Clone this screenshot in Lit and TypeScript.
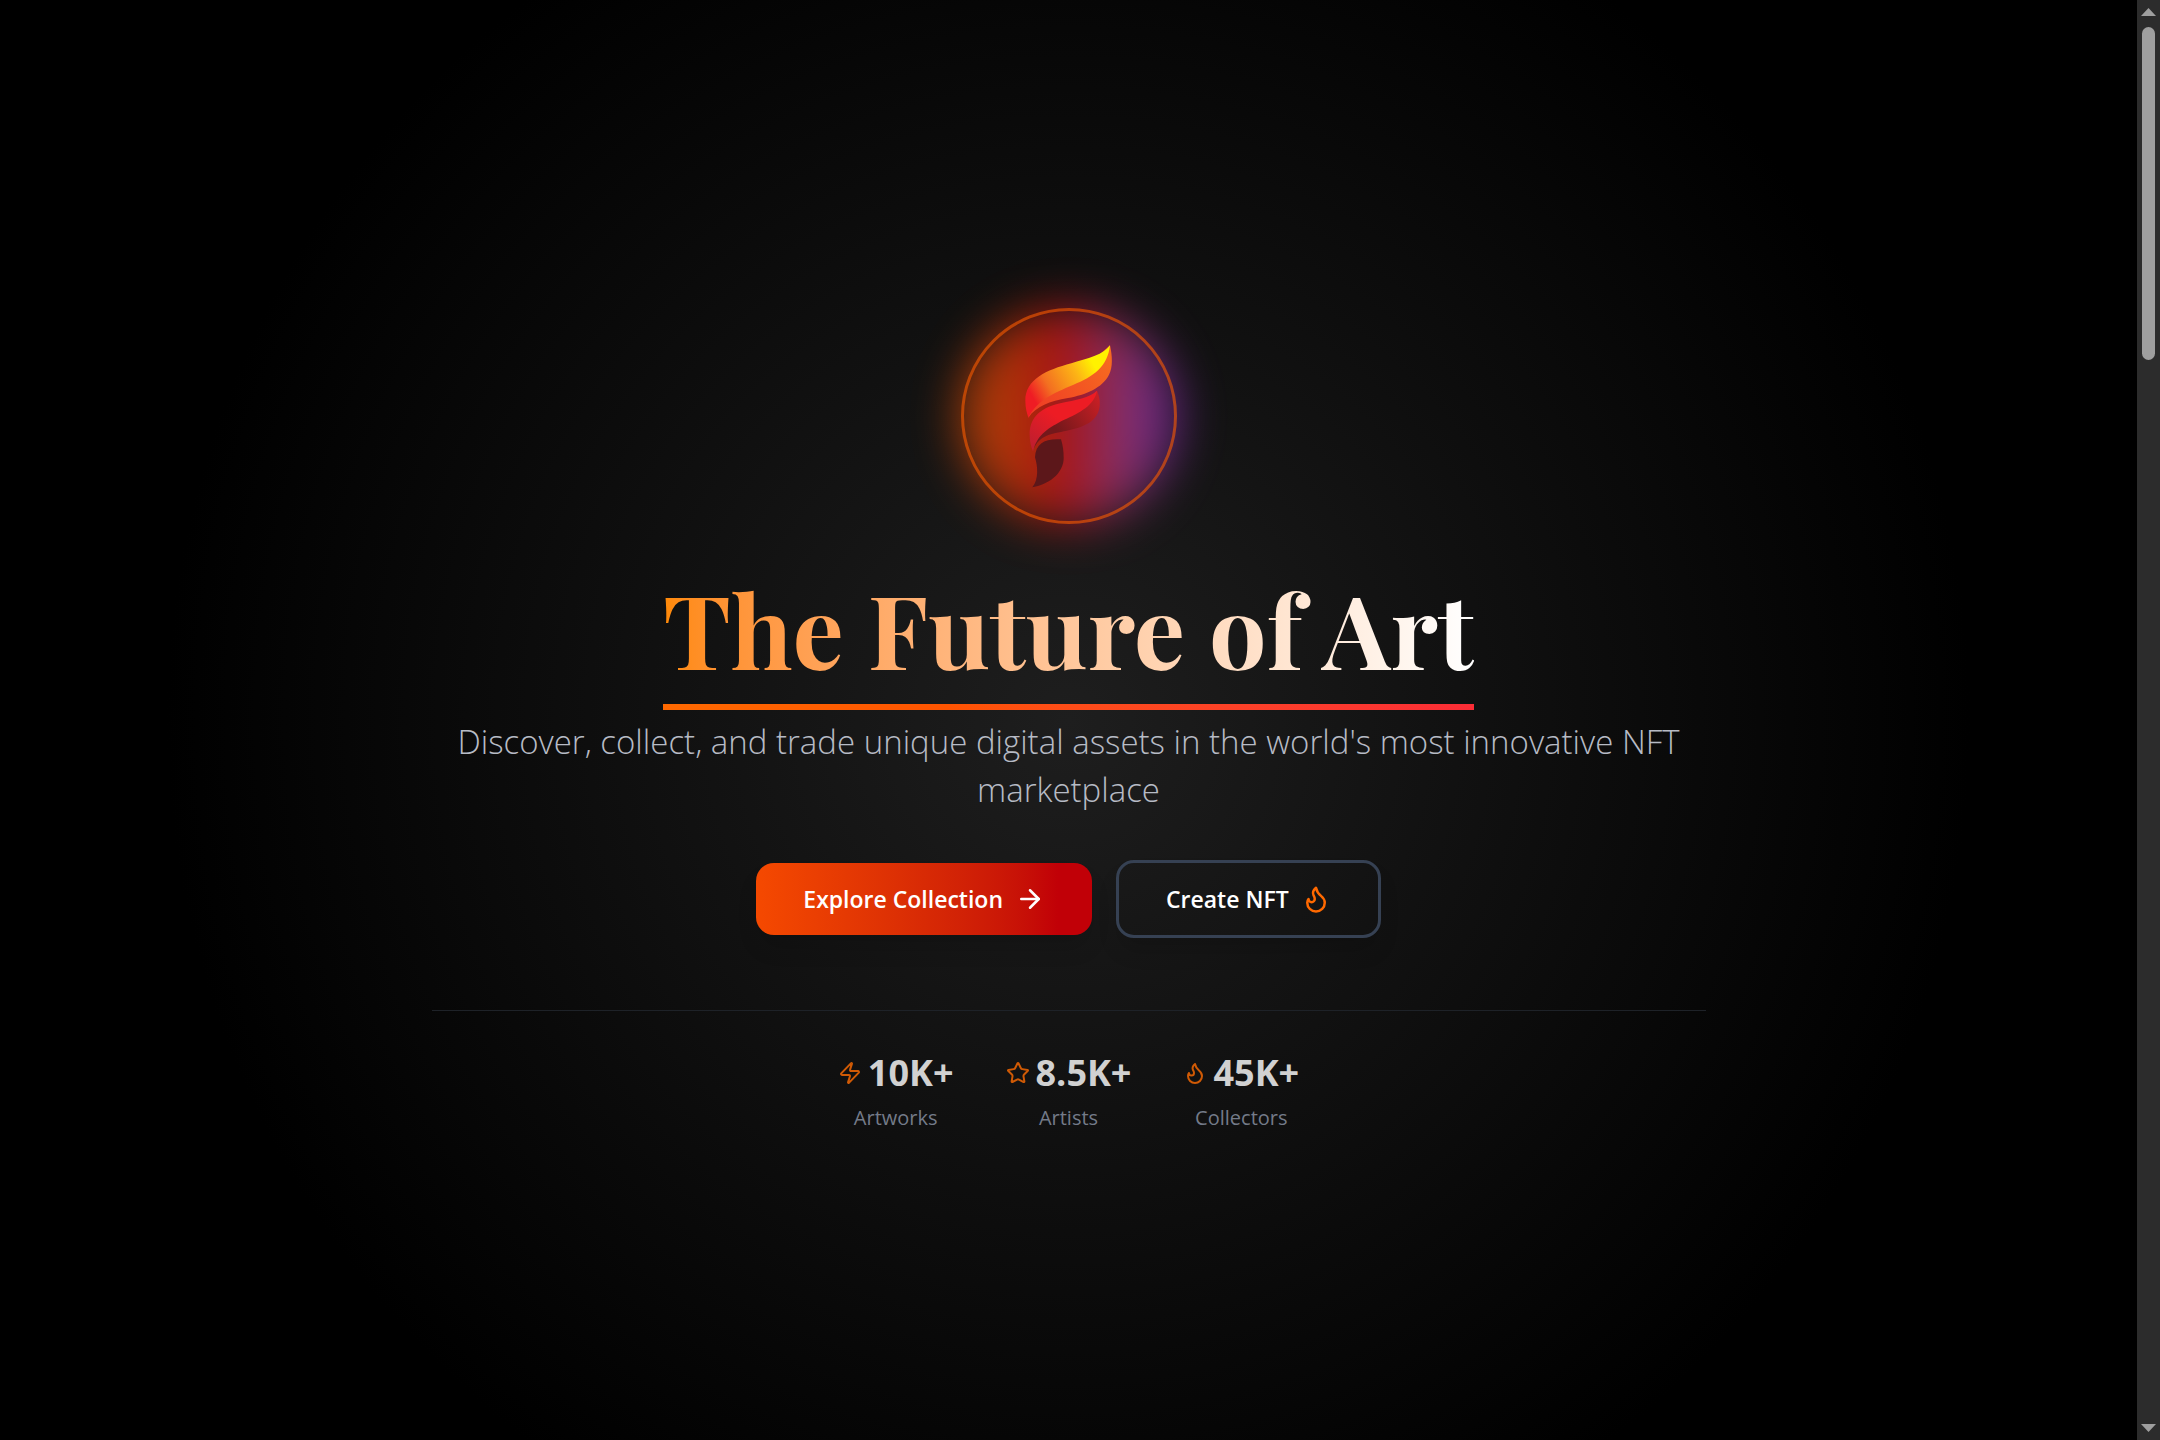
import { LitElement, html, css, svg } from "lit";
import { customElement, property } from "lit/decorators.js";

const ICONS: Record<string, unknown> = {
  arrow: svg`<path d="M5 12h14"/><path d="m12 5 7 7-7 7"/>`,
  flame: svg`<path d="M8.5 14.5A2.5 2.5 0 0 0 11 12c0-1.38-.5-2-1-3-1.072-2.143-.224-4.054 2-6 .5 2.5 2 4.9 4 6.5 2 1.6 3 3.5 3 5.5a7 7 0 1 1-14 0c0-1.153.433-2.294 1-3a2.5 2.5 0 0 0 2.5 2.5z"/>`,
  zap: svg`<path d="M4 14a1 1 0 0 1-.78-1.63l9.9-10.2a.5.5 0 0 1 .86.46l-1.92 6.02A1 1 0 0 0 13 10h7a1 1 0 0 1 .78 1.63l-9.9 10.2a.5.5 0 0 1-.86-.46l1.92-6.02A1 1 0 0 0 11 14z"/>`,
  star: svg`<path d="M11.525 2.295a.53.53 0 0 1 .95 0l2.31 4.679a2.123 2.123 0 0 0 1.595 1.16l5.166.756a.53.53 0 0 1 .294.904l-3.736 3.638a2.123 2.123 0 0 0-.611 1.878l.882 5.14a.53.53 0 0 1-.771.56l-4.618-2.428a2.122 2.122 0 0 0-1.973 0L6.396 21.01a.53.53 0 0 1-.77-.56l.881-5.139a2.122 2.122 0 0 0-.611-1.879L2.16 9.795a.53.53 0 0 1 .294-.906l5.165-.755a2.122 2.122 0 0 0 1.597-1.16z"/>`,
};

@customElement("line-icon")
class LineIcon extends LitElement {
  @property() name = "flame";

  static styles = css`
    :host {
      display: block;
      flex: none;
      width: 24px;
      height: 24px;
    }
    .icon {
      display: block;
      width: 100%;
      height: 100%;
      fill: none;
      stroke: currentColor;
      stroke-width: 2;
      stroke-linecap: round;
      stroke-linejoin: round;
    }
  `;

  render() {
    return html`<svg class="icon" viewBox="0 0 24 24" aria-hidden="true">${ICONS[this.name]}</svg>`;
  }
}

@customElement("brand-mark")
class BrandMark extends LitElement {
  static styles = css`
    :host {
      display: block;
    }
    .mark {
      position: relative;
      display: grid;
      place-items: center;
      box-sizing: border-box;
      width: 216px;
      height: 216px;
    }
    .glow {
      position: absolute;
      inset: 0;
      border-radius: 50%;
      background: linear-gradient(to right in oklab, #fa5c00, #e6000c 48%, #8a28d0);
      opacity: 0.7;
      filter: blur(24px);
    }
    .ring {
      position: absolute;
      inset: 0;
      border: 3px solid rgba(250, 92, 0, 0.6);
      border-radius: 50%;
    }
    .glyph {
      position: relative;
      display: block;
      width: 144px;
      height: 168px;
    }
  `;

  render() {
    return html`
      <div class="mark">
        <div class="glow"></div>
        <svg class="glyph" viewBox="-8 8 432 504" aria-hidden="true">
          <defs>
            <linearGradient id="top" gradientUnits="userSpaceOnUse" x1="100" y1="205" x2="300" y2="90">
              <stop offset="0" stop-color="#ef1c24" />
              <stop offset="0.25" stop-color="#f36f21" />
              <stop offset="0.65" stop-color="#fdb515" />
              <stop offset="0.9" stop-color="#fff200" />
            </linearGradient>
            <linearGradient id="fold" gradientUnits="userSpaceOnUse" x1="90" y1="250" x2="330" y2="90">
              <stop offset="0" stop-color="#ef3a25" />
              <stop offset="1" stop-color="#f66a20" />
            </linearGradient>
            <linearGradient id="mid" gradientUnits="userSpaceOnUse" x1="190" y1="240" x2="95" y2="350">
              <stop offset="0.2" stop-color="#ed1c24" />
              <stop offset="1" stop-color="#bf1e2e" />
            </linearGradient>
            <linearGradient id="under" gradientUnits="userSpaceOnUse" x1="170" y1="300" x2="300" y2="210">
              <stop offset="0" stop-color="#74181b" />
              <stop offset="1" stop-color="#c71f25" />
            </linearGradient>
          </defs>
          <path fill="url(#fold)" d="M331 48C338 80 340 115 328 136C308 176 258 196 205 206C150 216 110 230 86 265C100 200 200 150 250 120Z" />
          <path fill="url(#top)" d="M331 48C312 76 268 86 215 102C140 122 77 150 77 214C77 236 82 252 86 265C112 214 160 192 220 167C282 142 324 112 331 48Z" />
          <path fill="url(#under)" d="M292 184C304 212 303 240 290 259C268 294 210 302 168 311C136 318 116 330 103 356C110 300 200 260 240 240Z" />
          <path fill="url(#mid)" d="M292 184C270 206 228 211 182 222C112 238 90 272 90 316C90 336 94 352 100 366C112 314 150 294 192 272C240 250 284 228 292 184Z" />
          <path fill="#5c171a" d="M184 330C190 350 192 366 192 386C192 424 160 462 98 474C118 450 114 410 106 384C108 342 136 327 184 330Z" />
        </svg>
        <div class="ring"></div>
      </div>
    `;
  }
}

@customElement("app-root")
class AppRoot extends LitElement {
  private stats = [
    { icon: "zap", value: "10K+", label: "Artworks" },
    { icon: "star", value: "8.5K+", label: "Artists" },
    { icon: "flame", value: "45K+", label: "Collectors" },
  ];

  static styles = css`
    :host {
      display: flex;
      min-height: 100vh;
      background: #000;
      color: #fff;
      font-family: "Segoe UI", "Open Sans", "Noto Sans", sans-serif;
    }
    .hero {
      flex: 1;
      display: flex;
      flex-direction: column;
      align-items: center;
      justify-content: center;
      background: radial-gradient(circle at center, #1e1e1e 0%, #000 70%);
    }
    .title {
      margin: 48px 0 0;
      padding-bottom: 20px;
      font-family: "Playfair Display", "Liberation Serif", serif;
      font-size: 102px;
      font-weight: 700;
      line-height: 112px;
      white-space: nowrap;
      border-bottom: 6px solid;
      border-image: linear-gradient(to right in oklab, #ff6900, #ff5400 35%, #fb2c36) 1;
    }
    .title-text {
      display: block;
      background: linear-gradient(to right in oklab, #ff8904, #fff);
      -webkit-background-clip: text;
      background-clip: text;
      color: transparent;
    }
    .content {
      box-sizing: border-box;
      width: 100%;
      max-width: 1274px;
      display: flex;
      flex-direction: column;
      align-items: center;
    }
    .lead {
      margin: 8px 0 0;
      padding: 0 12px;
      font-size: 33px;
      font-weight: 300;
      line-height: 48px;
      color: #b7bbc5;
      text-align: center;
    }
    .actions {
      display: flex;
      align-items: center;
      gap: 24px;
      margin-top: 46px;
    }
    .button {
      display: flex;
      align-items: center;
      gap: 12px;
      padding: 18px 47px;
      border: 0;
      border-radius: 18px;
      font: inherit;
      font-size: 23px;
      font-weight: 600;
      line-height: 36px;
      color: #fff;
      cursor: pointer;
      box-shadow: 0 15px 22px -4px rgba(0, 0, 0, 0.15);
    }
    .button line-icon {
      width: 30px;
      height: 30px;
    }
    .primary {
      background: linear-gradient(to right in oklab, #f54900, #c10007 90%);
    }
    .secondary {
      border: 3px solid #364153;
      background: transparent;
    }
    .secondary line-icon {
      color: #ff6900;
    }
    .stats {
      align-self: stretch;
      display: flex;
      justify-content: center;
      gap: 52px;
      margin: 72px 0 0;
      padding-top: 38px;
      border-top: 1px solid #1e2228;
    }
    .stat {
      display: flex;
      flex-direction: column-reverse;
      align-items: center;
      gap: 6px;
    }
    .value {
      display: flex;
      align-items: center;
      gap: 6px;
      margin: 0;
      font-size: 36px;
      font-weight: 700;
      line-height: 48px;
      color: #d1d1d1;
    }
    .value line-icon {
      color: #d05a05;
    }
    .label {
      font-size: 20px;
      line-height: 30px;
      color: #747b89;
    }
    .scrollbar {
      flex: none;
      box-sizing: border-box;
      width: 23px;
      height: 100vh;
      display: flex;
      flex-direction: column;
      align-items: center;
      padding: 8px 0;
      background: #2c2c2c;
    }
    .arrow {
      width: 15px;
      height: 8px;
      background: #9f9f9f;
    }
    .up {
      clip-path: polygon(50% 0, 100% 100%, 0 100%);
    }
    .down {
      clip-path: polygon(0 0, 100% 0, 50% 100%);
    }
    .track {
      flex: 1;
      padding: 11px 0;
    }
    .thumb {
      width: 13px;
      height: 24%;
      border-radius: 7px;
      background: #9f9f9f;
    }
  `;

  render() {
    return html`
      <main class="hero">
        <brand-mark></brand-mark>
        <h1 class="title"><span class="title-text">The Future of Art</span></h1>
        <div class="content">
          <p class="lead">
            Discover, collect, and trade unique digital assets in the world's most innovative NFT marketplace
          </p>
          <div class="actions">
            <button class="button primary" type="button">
              Explore Collection <line-icon name="arrow"></line-icon>
            </button>
            <button class="button secondary" type="button">
              Create NFT <line-icon name="flame"></line-icon>
            </button>
          </div>
          <dl class="stats">
            ${this.stats.map(
              (s) => html`
                <div class="stat">
                  <dt class="label">${s.label}</dt>
                  <dd class="value"><line-icon name=${s.icon}></line-icon>${s.value}</dd>
                </div>
              `,
            )}
          </dl>
        </div>
      </main>
      <div class="scrollbar" aria-hidden="true">
        <div class="arrow up"></div>
        <div class="track"><div class="thumb"></div></div>
        <div class="arrow down"></div>
      </div>
    `;
  }
}
